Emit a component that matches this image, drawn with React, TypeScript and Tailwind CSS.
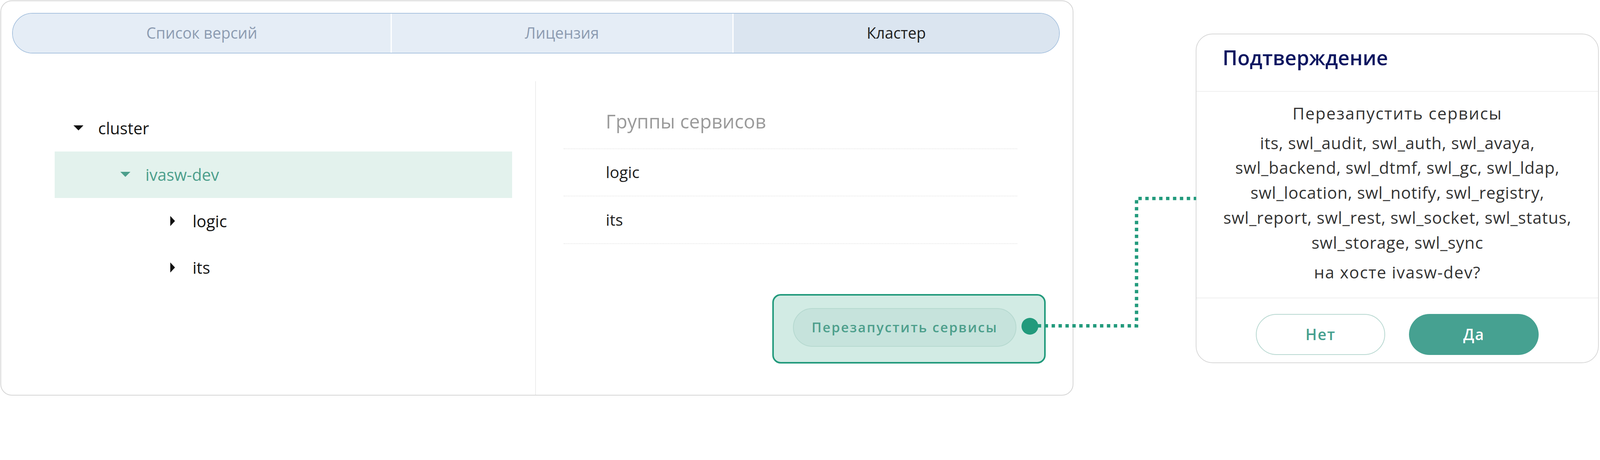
const tabs = [
  { label: "Список версий", active: false },
  { label: "Лицензия", active: false },
  { label: "Кластер", active: true },
];

type TreeNode = { label: string; level: number; open: boolean; selected?: boolean };

const tree: TreeNode[] = [
  { label: "cluster", level: 0, open: true },
  { label: "ivasw-dev", level: 1, open: true, selected: true },
  { label: "logic", level: 2, open: false },
  { label: "its", level: 2, open: false },
];

// full class names, one per tree level
const indent = ["pl-[55px]", "pl-[195px]", "pl-[335px]"];

const groups = ["logic", "its"];

const services =
  "its, swl_audit, swl_auth, swl_avaya, swl_backend, swl_dtmf, swl_gc, swl_ldap, swl_location, swl_notify, swl_registry, swl_report, swl_rest, swl_socket, swl_status, swl_storage, swl_sync";

function Caret({ open, color }: { open: boolean; color: string }) {
  if (open) {
    return (
      <svg width="30" height="16" viewBox="0 0 30 16" className="shrink-0">
        <polygon points="0,0 30,0 15,15" fill={color} />
      </svg>
    );
  }
  return (
    <svg width="30" height="30" viewBox="0 0 30 30" className="shrink-0">
      <polygon points="8,0 22,15 8,30" fill={color} />
    </svg>
  );
}

export default function App() {
  return (
    // sizes below are in screenshot pixels; the zoom maps them onto the 4096px wide layout viewport
    <div className="relative flex h-[1178px] w-[4747px] items-start overflow-hidden bg-white pl-[1px] pt-[1px] font-['Open_Sans',sans-serif] [zoom:0.86286]">
      {/* main card */}
      <div className="flex h-[1173px] w-[3184px] shrink-0 flex-col rounded-[34px] border-[3px] border-[#d5d5d5] bg-white">
        <div className="ml-[33px] mr-[38px] mt-[35px] flex h-[120px] divide-x-[4px] divide-white overflow-hidden rounded-full border-[3px] border-[#a9c3df]">
          {tabs.map((tab) => (
            <div
              key={tab.label}
              className={`flex flex-auto items-center justify-center text-[45.5px] ${
                tab.active ? "bg-[#dbe5f0] text-[#1e1e1e]" : "bg-[#e5edf6] text-[#8c9bb1]"
              }`}
            >
              {tab.label}
            </div>
          ))}
        </div>

        <div className="mt-[83px] flex flex-1">
          {/* tree */}
          <div className="w-[1587px] shrink-0 border-r-[3px] border-[#ededed] pl-[159px] pr-[69px] pt-[70px]">
            {tree.map((node) => (
              <div
                key={node.label}
                className={`flex h-[138px] items-center text-[48px] ${indent[node.level]} ${
                  node.selected ? "bg-[#e3f2ed] text-[#4c9f8c]" : "text-[#141414]"
                }`}
              >
                <Caret open={node.open} color={node.selected ? "#4c9f8c" : "#111111"} />
                <span className="ml-[44px]">{node.label}</span>
              </div>
            ))}
          </div>

          {/* groups */}
          <div className="flex flex-1 flex-col">
            <div className="pl-[82px] pr-[165px] pt-[60px]">
              <div className="flex h-[141px] items-center border-b-[3px] border-dotted border-[#e6e6e6] pb-[22px] pl-[125px] text-[56.5px] text-[#9a9a9a]">
                Группы сервисов
              </div>
              {groups.map((g) => (
                <div
                  key={g}
                  className="flex h-[141px] items-center border-b-[3px] border-dotted border-[#e6e6e6] pl-[125px] text-[47px] text-[#202020]"
                >
                  {g}
                </div>
              ))}
            </div>
            <div className="flex-1" />
            <div className="flex justify-end pb-[93px] pr-[80px]">
              <div className="flex items-start rounded-[25px] border-[5px] border-[#229a7c] bg-[#d2ebe4] pb-[45px] pl-[56px] pr-[18px] pt-[37px]">
                <button className="flex h-[115px] w-[664px] items-center justify-center rounded-full border-[3px] border-[#b6d9d0] bg-[#c6e3dc] text-[40px] font-semibold tracking-[0.08em] text-[#4d9f8c]">
                  Перезапустить сервисы
                </button>
                <div className="ml-[14px] mt-[29px] size-[50px] rounded-full bg-[#229a7c]" />
              </div>
            </div>
          </div>
        </div>
      </div>

      {/* confirm dialog */}
      <div className="ml-[363px] mt-[99px] flex h-[978px] w-[1196px] shrink-0 flex-col rounded-[50px] border-[3px] border-[#d8d8d8] bg-white">
        <div className="border-b-[3px] border-[#efefef] px-[77px] pb-[54px] pt-[24px]">
          <h2 className="text-[60px] font-semibold leading-normal text-[#0c1660]">Подтверждение</h2>
        </div>
        <div className="border-b-[3px] border-[#efefef] px-[55px] pb-[39px] pt-[26px] text-center text-[49px] leading-[74px] text-[#333333]">
          <p className="tracking-[2.5px]">Перезапустить сервисы</p>
          <p className="mt-[14px] tracking-[1px]">{services}</p>
          <p className="mt-[14px] tracking-[2px]">на хосте ivasw-dev?</p>
        </div>
        <div className="flex flex-1 items-start justify-center gap-[71px] pt-[46px]">
          <button className="h-[121px] w-[383px] rounded-full border-[3px] border-[#b8d8d1] bg-white text-[45px] font-semibold tracking-[0.05em] text-[#46a08f]">
            Нет
          </button>
          <button className="h-[121px] w-[385px] rounded-full bg-[#46a191] text-[45px] font-semibold tracking-[0.05em] text-white">
            Да
          </button>
        </div>
      </div>

      {/* connector from the button to the dialog */}
      <svg className="pointer-events-none absolute left-0 top-0" width="4747" height="1178">
        <path
          d="M3079 967 H3372 V589 H3549"
          fill="none"
          stroke="#229a7c"
          strokeWidth="10"
          strokeDasharray="10 10.5"
        />
      </svg>
    </div>
  );
}
